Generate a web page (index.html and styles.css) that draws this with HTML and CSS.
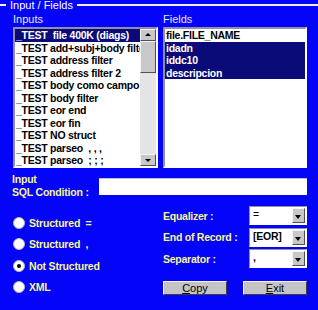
FILE: index.html
```html
<!DOCTYPE html>
<html lang="en">
<head>
  <meta charset="UTF-8">
  <title>Input / Fields</title>
  <link rel="stylesheet" href="styles.css">
</head>
<body>

  <div class="frame">
    <div class="legend">
      <span class="rule short"></span>
      <span class="legend-text">Input / Fields</span>
      <span class="rule"></span>
    </div>

    <div class="lists">
      <div class="col">
        <div class="cap">Inputs</div>
        <div class="listbox">
          <ul class="items">
            <li class="sel">_TEST&nbsp; file 400K (diags)</li>
            <li>_TEST add+subj+body filter</li>
            <li>_TEST address filter</li>
            <li>_TEST address filter 2</li>
            <li>_TEST body como campo</li>
            <li>_TEST body filter</li>
            <li>_TEST eor end</li>
            <li>_TEST eor fin</li>
            <li>_TEST NO struct</li>
            <li>_TEST parseo&nbsp; , , ,</li>
            <li>_TEST parseo&nbsp; ; ; ;</li>
          </ul>
          <div class="scrollbar">
            <div class="sb-btn up"></div>
            <div class="sb-thumb"></div>
            <div class="sb-track"></div>
            <div class="sb-btn down"></div>
          </div>
        </div>
      </div>
      <div class="col">
        <div class="cap">Fields</div>
        <div class="listbox">
          <ul class="items">
            <li>file.FILE_NAME</li>
            <li class="sel">idadn</li>
            <li class="sel">iddc10</li>
            <li class="sel">descripcion</li>
          </ul>
        </div>
      </div>
    </div>

    <div class="sql">
      <div class="sql-label">Input<br>SQL Condition :</div>
      <div class="textbox"></div>
    </div>

    <div class="options">
      <div class="radios">
        <div class="radio"><span class="dot"></span>Structured&nbsp; =</div>
        <div class="radio"><span class="dot"></span>Structured&nbsp; ,</div>
        <div class="radio"><span class="dot on"></span>Not Structured</div>
        <div class="radio"><span class="dot"></span>XML</div>
      </div>
      <div class="settings">
        <div class="setting">
          <span class="lbl">Equalizer :</span>
          <div class="combo"><span class="combo-val thin">=</span><span class="combo-btn"></span></div>
        </div>
        <div class="setting">
          <span class="lbl">End of Record :</span>
          <div class="combo"><span class="combo-val">[EOR]</span><span class="combo-btn"></span></div>
        </div>
        <div class="setting">
          <span class="lbl">Separator :</span>
          <div class="combo"><span class="combo-val">,</span><span class="combo-btn"></span></div>
        </div>
        <div class="buttons">
          <button class="btn"><u>C</u>opy</button>
          <button class="btn"><u>E</u>xit</button>
        </div>
      </div>
    </div>
  </div>

</body>
</html>
```

FILE: styles.css
```css
* {
  margin: 0;
  padding: 0;
  box-sizing: border-box;
}

body {
  width: 318px;
  height: 310px;
  overflow: hidden;
  background: #0404f8;
  font-family: 'Liberation Sans', Arial, sans-serif;
  font-size: 11px;
}

.legend {
  display: flex;
  align-items: center;
  height: 10px;
  color: #fff;
}

.rule {
  flex: 1;
  height: 2px;
  background: #f0f0ff;
}

.rule.short {
  flex: 0 0 6px;
}

.legend-text {
  padding: 0 4px;
  line-height: 10px;
}

.lists {
  display: grid;
  grid-template-columns: 145px 144px;
  gap: 5px;
  padding-left: 13px;
}

.cap {
  height: 17px;
  line-height: 18px;
  color: #e8e8ff;
}

.listbox {
  display: flex;
  height: 141px;
  background: #fff;
  border: 2px solid;
  border-color: #9090a0 #ffffff #ffffff #9090a0;
  overflow: hidden;
}

.items {
  flex: 1;
  list-style: none;
  overflow: hidden;
}

.items li {
  height: 12.5px;
  line-height: 12.5px;
  padding-left: 1px;
  font-size: 10.5px;
  letter-spacing: -0.25px;
  font-weight: bold;
  color: #000;
  white-space: nowrap;
  overflow: hidden;
}

.items li.sel {
  background: #0a0a78;
  color: #fff;
}

.scrollbar {
  display: flex;
  flex-direction: column;
  width: 16px;
  flex: 0 0 16px;
  background: #e4e4e4;
}

.sb-btn,
.sb-thumb {
  background: #c8c8c8;
  border: 1px solid;
  border-color: #f4f4f4 #505050 #505050 #f4f4f4;
}

.sb-btn {
  height: 12px;
  position: relative;
}

.sb-btn::after {
  content: '';
  position: absolute;
  left: 4px;
  border-left: 3px solid transparent;
  border-right: 3px solid transparent;
}

.sb-btn.up::after {
  top: 3px;
  border-bottom: 3px solid #000;
}

.sb-btn.down::after {
  top: 4px;
  border-top: 3px solid #000;
}

.sb-thumb {
  height: 32px;
}

.sb-track {
  flex: 1;
}

.sql {
  display: flex;
  padding-left: 12px;
  margin-top: 5px;
}

.sql-label {
  width: 87px;
  line-height: 13px;
  font-size: 10.5px;
  letter-spacing: -0.2px;
  font-weight: bold;
  color: #f6f690;
}

.textbox {
  width: 208px;
  height: 17px;
  margin-top: 5px;
  background: #fff;
  border-top: 1px solid #c0c0d0;
}

.options {
  display: flex;
  padding-left: 13px;
}

.radios {
  width: 150px;
  padding-top: 13px;
}

.radio {
  display: flex;
  align-items: center;
  gap: 4px;
  height: 21.5px;
  font-size: 10.5px;
  letter-spacing: -0.2px;
  font-weight: bold;
  color: #f6f690;
}

.dot {
  position: relative;
  width: 12px;
  height: 12px;
  border-radius: 50%;
  background: #fff;
  border: 1px solid #b8b8c8;
}

.dot.on::after {
  content: '';
  position: absolute;
  left: 3px;
  top: 3px;
  width: 4px;
  height: 4px;
  border-radius: 50%;
  background: #000;
}

.settings {
  width: 144px;
  padding-top: 7px;
}

.setting {
  display: flex;
  align-items: center;
  justify-content: space-between;
  height: 19px;
  margin-bottom: 2.5px;
  font-size: 10.5px;
  letter-spacing: -0.25px;
  font-weight: bold;
  color: #f6f690;
}

.combo {
  display: flex;
  width: 58px;
  height: 19px;
  background: #fff;
  border: 1px solid;
  border-color: #9090a0 #ffffff #ffffff #9090a0;
  padding: 1px;
}

.combo-val {
  flex: 1;
  padding-left: 2px;
  line-height: 13px;
  color: #000;
}

.combo-val.thin {
  font-weight: normal;
}

.combo-btn {
  position: relative;
  width: 13px;
  background: #c8c8c8;
  border: 1px solid;
  border-color: #f4f4f4 #505050 #505050 #f4f4f4;
}

.combo-btn::after {
  content: '';
  position: absolute;
  left: 2px;
  top: 6px;
  border-left: 3.5px solid transparent;
  border-right: 3.5px solid transparent;
  border-top: 4px solid #000;
}

.buttons {
  display: flex;
  justify-content: space-between;
  margin-top: 13px;
}

.btn {
  width: 64px;
  height: 14px;
  background: #c4c4c4;
  border: 1px solid;
  border-color: #f4f4f4 #404040 #404040 #f4f4f4;
  font-family: 'Liberation Sans', Arial, sans-serif;
  font-size: 11px;
  line-height: 11px;
  color: #000;
}
```
